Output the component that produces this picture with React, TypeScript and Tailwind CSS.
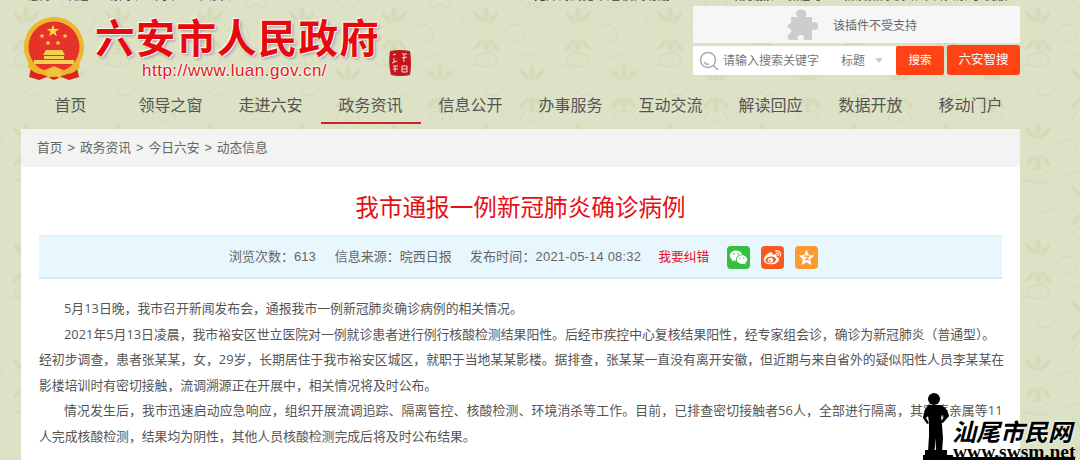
import React from "react";
import { RiWechatFill, RiWeiboFill } from "react-icons/ri";

const CJK = "font-['Liberation_Sans','Noto_Sans_CJK_SC',sans-serif]";
const BODY = "font-['Open_Sans','Noto_Sans_CJK_SC',sans-serif]";

function Pattern() {
  return (
    <svg className="absolute inset-0" width="1080" height="460" aria-hidden="true">
      <defs>
        <g id="leaf">
          <path d="M0 0C-4-6-4-12 0-18C4-12 4-6 0 0Z" />
          <path d="M-2-1C-9-3-12-7-13-13C-7-11-3-7-2-1Z" />
          <path d="M2-1C9-3 12-7 13-13C7-11 3-7 2-1Z" />
        </g>
        <pattern id="bgp" width="92" height="116" patternUnits="userSpaceOnUse" patternTransform="translate(4 2)">
          <g fill="#d5dbb9">
            <use href="#leaf" transform="translate(22 22)" />
            <use href="#leaf" transform="translate(22 36) rotate(180)" />
            <use href="#leaf" transform="translate(68 80)" />
            <use href="#leaf" transform="translate(68 94) rotate(180)" />
          </g>
          <g fill="none" stroke="#d6dcbb" strokeWidth="1.4">
            <path d="M22 51c-10 0-14 7-9 11s10-2 5-5M22 51c10 0 14 7 9 11s-10-2-5-5M22 65c-10 0-14-7-9-11M22 65c10 0 14-7 9-11" />
            <path d="M68-7c-10 0-14 7-9 11s10-2 5-5M68-7c10 0 14 7 9 11s-10-2-5-5M68 109c-10 0-14 7-9 11M68 109c10 0 14 7 9 11" />
            <path d="M40 29c7-9 17-9 20 0s-5 14-10 9M40 87c-7 9-17 9-20 0M51 58c9-7 17-7 20-2M0 58c7 7 12 7 17 3M85 29c5-5 7-10 7-12" />
          </g>
        </pattern>
      </defs>
      <rect width="1080" height="460" fill="url(#bgp)" />
    </svg>
  );
}

function Emblem() {
  const star = (x: number, y: number, r: number) => {
    const p: string[] = [];
    for (let i = 0; i < 10; i++) {
      const a = (-90 + i * 36) * (Math.PI / 180);
      const q = i % 2 ? r * 0.4 : r;
      p.push(`${x + q * Math.cos(a)},${y + q * Math.sin(a)}`);
    }
    return <polygon points={p.join(" ")} fill="#fbd848" />;
  };
  return (
    <svg width="62" height="64" viewBox="0 0 62 64" aria-hidden="true" className="shrink-0">
      <path d="M9 46L6 60L16 63L24 60L31 63L38 60L46 63L56 60L53 46Z" fill="#d8281c" />
      <circle cx="31" cy="30" r="30" fill="#eeb52f" />
      <circle cx="31" cy="30" r="25.5" fill="#e5332a" />
      {star(30, 14, 6.5)}
      {star(19, 19, 2.8)}
      {star(42, 19, 2.8)}
      {star(25, 26, 2.8)}
      {star(35, 26, 2.8)}
      <path d="M23 33H39L42 38H20ZM21 39H41V42H21ZM11 43H51V47H11Z" fill="#f6cf50" />
      <path d="M6 44C11 50 18 55 24 52L31 49L38 52C44 55 51 50 56 44L57 50C50 58 42 58 38 56L31 53L24 56C20 58 12 58 5 50Z" fill="#eeb52f" />
      <path d="M24 54L31 50L38 54L38 62L31 58L24 62Z" fill="#f2c33c" />
    </svg>
  );
}

function Header() {
  return (
    <div className="flex h-[83px] justify-between pl-[23px] pr-[60px]">
      <div className="flex pt-[15px]">
        <Emblem />
        <div className="ml-[10px] flex flex-col">
          <div className={`-mt-[1px] h-[46px] text-[39.5px] leading-[46px] font-bold tracking-[1.2px] whitespace-nowrap text-[#e60a0e] [text-shadow:1px_1px_1px_#fff,-1px_-1px_1px_#fff,2px_2px_3px_#999] ${CJK}`}>
            六安市人民政府
          </div>
          <div className="ml-[47px] text-[17px] leading-[18px] tracking-[0.5px] whitespace-nowrap text-[#e4171c] [text-shadow:0_0_2px_#fff,0_0_2px_#fff,0_0_2px_#fff] font-['Liberation_Sans',sans-serif]">
            http://www.luan.gov.cn/
          </div>
        </div>
        <svg width="24" height="28" viewBox="0 0 24 28" aria-hidden="true" className="ml-[8px] mt-[32px] shrink-0">
          <path d="M2 2Q12 0 22 2Q24 14 22 26Q12 28 3 26Q0 14 2 2Z" fill="#c4161c" />
          <path d="M5 6L8 5M6 9L6 13M4 14L9 12M14 5L19 5M16 5L16 13M14 9L19 8M5 17L10 17M7 17L7 23M5 20L10 20M14 17L19 17L19 23L14 23ZM14 20L19 20" stroke="#f6d9d2" strokeWidth="1" fill="none" />
        </svg>
      </div>
      <div className="w-[327px] pt-[4px]">
        <div className="flex h-[37px] items-center bg-[#f6f6f6] pl-[93px]">
          <svg width="33" height="33" viewBox="0 0 33 33" aria-hidden="true" className="shrink-0">
            <path d="M5 9H12C10 7 9 5 11 3C13 1 19 1 20 4C21 6 20 8 19 9H26V15C29 13 32 14 32 18C32 22 29 23 26 21V32H17C19 29 18 27 15 27C12 27 11 29 12 32H4C1 31 1 28 3 26C6 24 6 22 4 21C1 19 1 17 3 16L5 15Z" fill="#cdcdcd" />
          </svg>
          <span className={`ml-[14px] pt-[2px] text-[12px] text-[#666] ${CJK}`}>该插件不受支持</span>
        </div>
        <div className="mt-[2px] flex h-[30px]">
          <div className={`mt-[1px] flex h-[29px] w-[203px] items-center bg-white pl-[6px] text-[12px] text-[#777] ${CJK}`}>
            <svg width="20" height="20" viewBox="0 0 20 20" aria-hidden="true" className="shrink-0">
              <circle cx="9" cy="9" r="7.5" fill="none" stroke="#aaa" strokeWidth="1.5" />
              <path d="M14 14L19 19M5 11Q7 14 10 13" stroke="#aaa" strokeWidth="1.5" fill="none" />
            </svg>
            <span className="ml-[4px] w-[118px]">请输入搜索关键字</span>
            <span className="w-[34px]">标题</span>
            <span className="h-0 w-0 border-x-[4px] border-t-[5px] border-x-transparent border-t-[#ccc]" />
          </div>
          <div className={`mt-[1px] flex h-[29px] w-[48px] items-center justify-center rounded-[2px] bg-[#ff4314] text-[11.5px] text-white ${CJK}`}>搜索</div>
          <div className={`ml-[3px] flex h-[30px] w-[73px] items-center justify-center rounded-[3px] bg-[#ff4314] text-[12.5px] text-white ${CJK}`}>六安智搜</div>
        </div>
      </div>
    </div>
  );
}

const NAV = ["首页", "领导之窗", "走进六安", "政务资讯", "信息公开", "办事服务", "互动交流", "解读回应", "数据开放", "移动门户"];

function Nav() {
  return (
    <div className={`flex h-[39px] pl-[20.5px] text-[16px] text-[#555] ${CJK}`}>
      {NAV.map((n) => (
        <div
          key={n}
          className={`flex h-[39px] w-[100px] items-start justify-center pt-[10px] leading-[22px] ${n === "政务资讯" ? "border-b-2 border-[#c9252b]" : ""}`}
        >
          {n}
        </div>
      ))}
    </div>
  );
}

function Clipped() {
  const bits = [
    ["ml-[28px]", "w-[22px]", "您好"],
    ["ml-[15px]", "w-[23px]", "欢迎"],
    ["ml-[19px]", "w-[30px]", "访问本"],
    ["ml-[18px]", "w-[20px]", "网站"],
    ["ml-[25px]", "w-[30px]", "六安市"],
    ["ml-[304px]", "w-[135px]", "无障碍浏览 长者模式 繁體中文 English"],
    ["ml-[61px]", "w-[43px]", "政务服务"],
    ["ml-[14px]", "w-[33px]", "微信号"],
    ["ml-[23px]", "w-[74px]", "新浪微博 腾讯微博"],
    ["ml-[3px]", "w-[90px]", "今日头条 手机版 客户端"],
  ];
  return (
    <div className="flex h-[2px] overflow-hidden">
      {bits.map(([m, w, t]) => (
        <div key={t} className={`${m} ${w} flex h-[2px] shrink-0 items-end overflow-hidden`}>
          <span className={`block shrink-0 -mb-[1px] text-[12px] leading-[14px] whitespace-nowrap text-[#444] ${CJK}`}>{t}</span>
        </div>
      ))}
    </div>
  );
}

function InfoBar() {
  return (
    <div className={`mx-[18px] mt-[8px] flex h-[44px] items-center border-y-2 border-t-[#e0eff8] border-b-[#d9e7f2] bg-[#e8f6fd] pl-[190px] text-[13px] text-[#666] ${CJK}`}>
      <span>浏览次数：613</span>
      <span className="ml-[19px]">信息来源：晥西日报</span>
      <span className="ml-[18px] tracking-[0.18px]">发布时间：2021-05-14 08:32</span>
      <span className="ml-[17px] text-[12.8px] text-[#e8141c]">我要纠错</span>
      <span className="ml-[18px] flex h-[23px] w-[23px] items-center justify-center rounded-[4px] bg-[#37bf3e]">
        <RiWechatFill className="h-[19px] w-[19px] text-white" />
      </span>
      <span className="ml-[11px] flex h-[23px] w-[23px] items-center justify-center rounded-[4px] bg-[#fb5a1c]">
        <RiWeiboFill className="h-[19px] w-[19px] text-white" />
      </span>
      <span className="ml-[11px] flex h-[23px] w-[23px] items-center justify-center rounded-[4px] bg-[#fb9a2f]">
        <svg width="17" height="17" viewBox="0 0 24 24" aria-hidden="true">
          <path d="M12 1L15.4 8.3L23 9.2L17.3 14.5L18.8 22.5L12 18.6L5.2 22.5L6.7 14.5L1 9.2L8.6 8.3Z" fill="#fff" />
          <path d="M8.5 10H15.5L11 15H16" stroke="#fb9a2f" strokeWidth="1.8" fill="none" />
        </svg>
      </span>
    </div>
  );
}

function Article() {
  return (
    <div className={`mx-[18px] mt-[17px] text-[12.85px] leading-[25.5px] whitespace-nowrap text-[#555] ${BODY}`}>
      <p className="indent-[25px]">5月13日晚，我市召开新闻发布会，通报我市一例新冠肺炎确诊病例的相关情况。</p>
      <p className="indent-[25px]">
        2021年5月13日凌晨，我市裕安区世立医院对一例就诊患者进行例行核酸检测结果阳性。后经市疾控中心复核结果阳性，经专家组会诊，确诊为新冠肺炎（普通型）。
        <br />
        经初步调查，患者张某某，女，29岁，长期居住于我市裕安区城区，就职于当地某某影楼。据排查，张某某一直没有离开安徽，但近期与来自省外的疑似阳性人员李某某在
        <br />
        影楼培训时有密切接触，流调溯源正在开展中，相关情况将及时公布。
      </p>
      <p className="indent-[25px]">
        <span className="tracking-[0.14px]">情况发生后，我市迅速启动应急响应，组织开展流调追踪、隔离管控、核酸检测、环境消杀等工作。目前，已排查密切接触者56人，全部进行隔离，其家庭亲属等11</span>
        <br />
        人完成核酸检测，结果均为阴性，其他人员核酸检测完成后将及时公布结果。
      </p>
    </div>
  );
}

function Watermark() {
  return (
    <div className="absolute left-[923px] top-[392px] h-[68px] w-[157px]">
      <svg width="32" height="68" viewBox="0 0 32 68" aria-hidden="true" className="absolute left-0 top-0">
        <circle cx="11" cy="7" r="6" fill="#000" />
        <path d="M6 13H17C22 14 25 19 26 24L20 31L18 30L21 24L18 23L19 33L20 46L19 60H13L12.5 46L11.5 60H5L6 44L6 30L5 24L3 26L6 31L4 32L0 26C1 19 3 14 6 13Z" fill="#000" />
        <rect x="2" y="58" width="22" height="5" fill="#000" />
        <rect x="0" y="63" width="30" height="5" fill="#000" />
      </svg>
      <div className={`absolute left-[29px] top-[27px] text-[24px] leading-[28px] font-bold whitespace-nowrap text-black italic [text-shadow:0_0_2px_#fff,0_0_2px_#fff] ${CJK}`}>
        汕尾市民网
      </div>
      <div className="absolute left-[30px] top-[54px] text-[19.5px] leading-[12px] font-bold whitespace-nowrap text-black [text-shadow:0_0_1px_#fff] font-['Liberation_Serif',serif]">
        www.swsm.net
      </div>
      <div className="absolute bottom-0 left-[2px] h-[3px] w-[150px] bg-black" />
    </div>
  );
}

export default function App() {
  return (
    <div className="relative h-[460px] w-[1080px] overflow-hidden bg-[#dde2c6]">
      <Pattern />
      <div className="relative">
        <Clipped />
        <Header />
        <Nav />
        <div className="ml-[21px] mt-[5px] h-[340px] w-[999px] bg-white">
          <div className={`flex h-[38px] items-center gap-[5px] bg-[#f3f3f3] pl-[16px] text-[12.75px] text-[#666] ${CJK}`}>
            <span>首页</span>
            <span>&gt;</span>
            <span>政务资讯</span>
            <span>&gt;</span>
            <span>今日六安</span>
            <span>&gt;</span>
            <span>动态信息</span>
          </div>
          <h1 className={`mt-[22px] h-[38px] text-center text-[23.6px] leading-[38px] text-[#e60f14] ${CJK}`}>我市通报一例新冠肺炎确诊病例</h1>
          <InfoBar />
          <Article />
        </div>
      </div>
      <Watermark />
    </div>
  );
}
